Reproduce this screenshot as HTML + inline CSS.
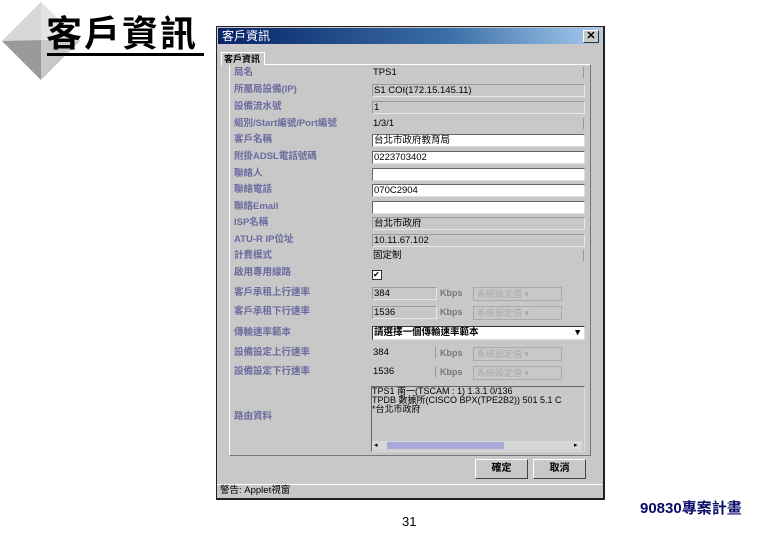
<!DOCTYPE html>
<html><head><meta charset="utf-8"><style>
body{margin:0;width:780px;height:540px;background:#fff;position:relative;overflow:hidden;font-family:"Liberation Sans","Noto Sans CJK TC",sans-serif}
.a{position:absolute}
.lab{position:absolute;left:234px;font-size:9.5px;font-weight:bold;color:#6a6aa0;line-height:12px;white-space:nowrap}
.f{position:absolute;left:372px;width:210px;height:11px;font-size:9.5px;line-height:11px;color:#000;padding-left:1px;white-space:nowrap;overflow:hidden}
.g{border:1px solid #9a9a9a;border-right-color:#e8e8e8;border-bottom-color:#e8e8e8;background:#c8c8c8}
.w{border:1px solid #666;background:#fff;border-right-color:#ddd;border-bottom-color:#ddd}
.n{background:transparent;border-right:1px solid #999}
.dd{position:absolute;width:84px;height:12px;border:1px solid #aaa;font-size:9px;color:#aaa;line-height:12px;padding-left:3px;white-space:nowrap}
.kb{position:absolute;left:440px;font-size:9px;font-weight:bold;color:#777;line-height:12px}
</style></head><body>
<svg class="a" style="left:0;top:0" width="82" height="82"><polygon points="41,2 80,41 41,80 2,41" fill="#c8c8c8"/><polygon points="41,2 80,41 41,40" fill="#e4e4e4"/><polygon points="2,41 41,80 41,40" fill="#9a9a9a"/><polygon points="41,2 2,41 41,40" fill="#d8d8d8"/></svg>
<div class="a" style="left:46px;top:13px;font-size:36px;font-weight:bold;line-height:42px;letter-spacing:2px">客戶資訊</div>
<div class="a" style="left:47px;top:53px;width:157px;height:3px;background:#000"></div>

<div class="a" style="left:216px;top:26px;width:386px;height:471px;background:#c8c8c8;border:1px solid #222;border-right:2px solid #222;border-bottom:2px solid #222"></div>
<div class="a" style="left:218px;top:28px;width:383px;height:16px;background:linear-gradient(90deg,#08246a,#3a6ea5 60%,#a6caf0)"></div>
<div class="a" style="left:222px;top:28px;font-size:12px;color:#fff;line-height:16px">客戶資訊</div>
<div class="a" style="left:583px;top:30px;width:14px;height:11px;background:#c8c8c8;border:1px solid #fff;border-right-color:#333;border-bottom-color:#333;font-size:11px;line-height:11px;text-align:center;font-weight:bold">✕</div>

<div class="a" style="left:229px;top:64px;width:360px;height:390px;border:1px solid #fff;border-right-color:#777;border-bottom-color:#777"></div>
<div class="a" style="left:221px;top:52px;width:40px;height:12px;border:1px solid #fff;border-bottom:none;background:#c8c8c8;font-size:9px;font-weight:bold;line-height:12px;padding-left:2px;white-space:nowrap">客戶資訊</div>

<div class="lab" style="top:67px">局名</div><div class="f n" style="top:67px">TPS1</div>
<div class="lab" style="top:84px">所屬局設備(IP)</div><div class="f g" style="top:84px">S1 COI(172.15.145.11)</div>
<div class="lab" style="top:101px">設備流水號</div><div class="f g" style="top:101px">1</div>
<div class="lab" style="top:118px">組別/Start編號/Port編號</div><div class="f n" style="top:118px">1/3/1</div>
<div class="lab" style="top:134px">客戶名稱</div><div class="f w" style="top:134px">台北市政府教育局</div>
<div class="lab" style="top:151px">附掛ADSL電話號碼</div><div class="f w" style="top:151px">0223703402</div>
<div class="lab" style="top:168px">聯絡人</div><div class="f w" style="top:168px"></div>
<div class="lab" style="top:184px">聯絡電話</div><div class="f w" style="top:184px">070C2904</div>
<div class="lab" style="top:201px">聯絡Email</div><div class="f w" style="top:201px"></div>
<div class="lab" style="top:217px">ISP名稱</div><div class="f g" style="top:217px">台北市政府</div>
<div class="lab" style="top:234px">ATU-R IP位址</div><div class="f g" style="top:234px">10.11.67.102</div>
<div class="lab" style="top:250px">計費模式</div><div class="f n" style="top:250px">固定制</div>
<div class="lab" style="top:267px">啟用專用線路</div>
<div class="a" style="left:372px;top:270px;width:8px;height:8px;border:1px solid #333;background:#fff;font-size:8px;line-height:8px">✔</div>
<div class="lab" style="top:287px">客戶承租上行速率</div><div class="f g" style="top:287px;width:62px">384</div><div class="kb" style="top:287px">Kbps</div><div class="dd" style="left:473px;top:287px">系統設定值 ▾</div>
<div class="lab" style="top:306px">客戶承租下行速率</div><div class="f g" style="top:306px;width:62px">1536</div><div class="kb" style="top:306px">Kbps</div><div class="dd" style="left:473px;top:306px">系統設定值 ▾</div>
<div class="lab" style="top:327px">傳輸速率範本</div><div class="f" style="top:326px;height:12px;background:#fff;border:1px solid #333;border-right-color:#ddd;border-bottom-color:#ddd;font-weight:bold">請選擇一個傳輸速率範本<span style="position:absolute;right:4px">▾</span></div>
<div class="lab" style="top:347px">設備設定上行速率</div><div class="f" style="top:347px;width:62px;border-right:1px solid #999">384</div><div class="kb" style="top:347px">Kbps</div><div class="dd" style="left:473px;top:347px">系統設定值 ▾</div>
<div class="lab" style="top:366px">設備設定下行速率</div><div class="f" style="top:366px;width:62px;border-right:1px solid #999">1536</div><div class="kb" style="top:366px">Kbps</div><div class="dd" style="left:473px;top:366px">系統設定值 ▾</div>
<div class="lab" style="top:411px">路由資料</div>
<div class="a" style="left:371px;top:386px;width:212px;height:64px;border:1px solid #666;border-right-color:#ddd;border-bottom-color:#ddd;background:#c8c8c8;font-size:9px;line-height:9px;white-space:pre;overflow:hidden">TPS1 南一(TSCAM : 1) 1.3.1 0/136
TPDB 數據所(CISCO BPX(TPE2B2)) 501 5.1 C
*台北市政府</div>
<div class="a" style="left:372px;top:441px;width:210px;height:9px;background:#d8d8d8"></div>
<div class="a" style="left:387px;top:442px;width:117px;height:7px;background:#a8a8d8"></div>
<div class="a" style="left:374px;top:441px;font-size:7px;line-height:9px">◂</div>
<div class="a" style="left:574px;top:441px;font-size:7px;line-height:9px">▸</div>

<div class="a" style="left:475px;top:459px;width:51px;height:18px;border:1px solid #fff;border-right-color:#444;border-bottom-color:#444;font-size:10px;font-weight:bold;text-align:center;line-height:18px">確定</div>
<div class="a" style="left:533px;top:459px;width:51px;height:18px;border:1px solid #fff;border-right-color:#444;border-bottom-color:#444;font-size:10px;font-weight:bold;text-align:center;line-height:18px">取消</div>
<div class="a" style="left:217px;top:484px;width:385px;height:1px;background:#fff"></div>
<div class="a" style="left:220px;top:485px;font-size:9.5px;line-height:12px">警告: Applet視窗</div>

<div class="a" style="left:402px;top:514px;font-size:13px;line-height:16px">31</div>
<div class="a" style="left:640px;top:500px;font-size:15px;font-weight:bold;color:#0a0a6a;line-height:18px">90830專案計畫</div>
</body></html>
